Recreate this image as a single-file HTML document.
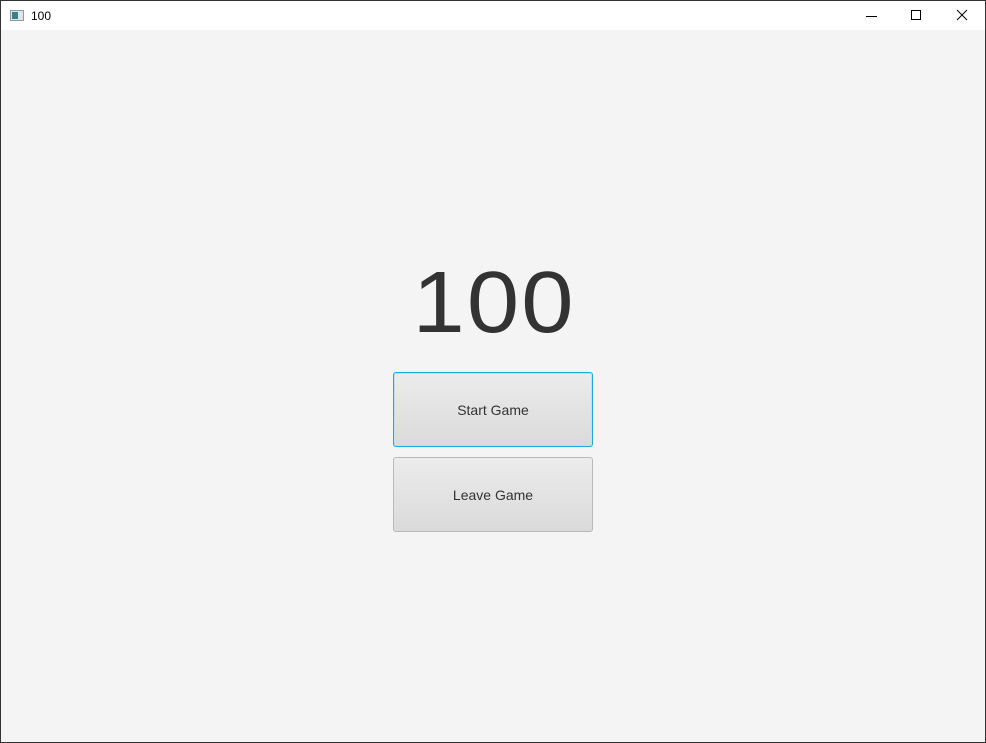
<!DOCTYPE html>
<html><head><style>
html,body{margin:0;padding:0;}
body{width:986px;height:743px;position:relative;overflow:hidden;background:#f4f4f4;font-family:"Liberation Sans",sans-serif;}
.frame{position:absolute;left:0;top:0;width:984px;height:741px;border:1px solid #333;}
.title{position:absolute;left:1px;top:1px;width:984px;height:29px;background:#fff;}
.ttext{position:absolute;left:30px;top:8px;font-size:12px;color:#000;}
.icon{position:absolute;left:9px;top:9px;width:14px;height:11px;border:1px solid #8a9aa6;background:#dfe6ea;box-sizing:border-box;}
.icon:before{content:"";position:absolute;left:1px;top:1px;width:6px;height:7px;background:#3e7e86;}
.big{position:absolute;left:0;width:986px;text-align:center;top:253px;font-size:87px;line-height:100px;color:#333;letter-spacing:2px;text-indent:2px;transform:scaleX(1.08);}
.btn{position:absolute;left:393px;width:200px;height:75px;box-sizing:border-box;border:1px solid #b9b9b9;border-radius:3px;background:linear-gradient(#ececec,#dadada);text-align:center;line-height:74px;font-size:14px;color:#333;}
.b1{top:372px;border:1px solid #1fa7e0;box-shadow:inset 0 0 0 1px #bfe0ef;}
.b2{top:457px;}
</style></head><body>
<div class="frame"></div>
<div class="title">
<div class="icon"></div>
<div class="ttext">100</div>
<svg style="position:absolute;left:860px;top:8px" width="120" height="14">
<line x1="5" y1="7.5" x2="16" y2="7.5" stroke="#000" stroke-width="1"/>
<rect x="50.5" y="1.5" width="9" height="9" fill="none" stroke="#000"/>
<line x1="96" y1="1" x2="106" y2="11" stroke="#000"/>
<line x1="106" y1="1" x2="96" y2="11" stroke="#000"/>
</svg>
</div>
<div class="big">100</div>
<div class="btn b1">Start Game</div>
<div class="btn b2">Leave Game</div>
</body></html>
